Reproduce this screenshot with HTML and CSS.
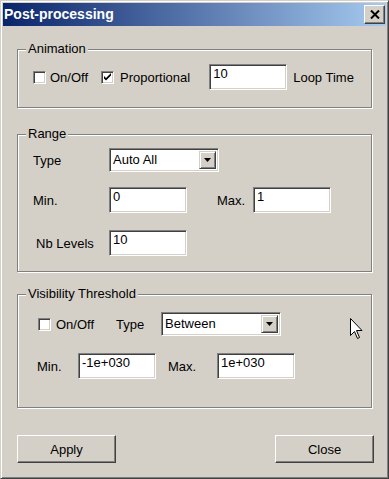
FILE: index.html
```html
<!DOCTYPE html>
<html>
<head>
<meta charset="utf-8">
<link rel="stylesheet" href="styles.css">
</head>
<body>
<div class="window">
  <div class="titlebar">
    <span class="title">Post-processing</span>
    <span class="close-btn"><svg width="10" height="9" viewBox="0 0 10 9"><path d="M1 0.5 L9 8.5 M9 0.5 L1 8.5" stroke="#000" stroke-width="2"/></svg></span>
  </div>
  <div class="client">
    <section class="group g-anim">
      <div class="caption">Animation</div>
      <div class="row r-anim">
        <span class="check c-on"></span><span class="lbl l-on">On/Off</span>
        <span class="check c-prop"><svg width="9" height="9" viewBox="0 0 9 9"><path d="M1 3 L1 5.5 L3 7.5 L8 2.5 L8 0 L3 5 Z" fill="#000"/></svg></span><span class="lbl l-prop">Proportional</span>
        <span class="field f-loop">10</span><span class="lbl l-loop">Loop Time</span>
      </div>
    </section>
    <section class="group g-range">
      <div class="caption">Range</div>
      <div class="row r-type">
        <span class="lbl l-col">Type</span>
        <span class="combo c-type"><span class="combo-text">Auto All</span><span class="drop"><svg width="7" height="4" viewBox="0 0 7 4"><path d="M0 0 H7 L3.5 4 Z" fill="#000"/></svg></span></span>
      </div>
      <div class="row r-min">
        <span class="lbl l-col">Min.</span>
        <span class="field">0</span>
        <span class="lbl l-max">Max.</span>
        <span class="field">1</span>
      </div>
      <div class="row r-nb">
        <span class="lbl l-nb">Nb Levels</span>
        <span class="field">10</span>
      </div>
    </section>
    <section class="group g-vis">
      <div class="caption">Visibility Threshold</div>
      <div class="row r-vis1">
        <span class="check c-vis"></span><span class="lbl l-on">On/Off</span>
        <span class="lbl l-vtype">Type</span>
        <span class="combo c-between"><span class="combo-text">Between</span><span class="drop"><svg width="7" height="4" viewBox="0 0 7 4"><path d="M0 0 H7 L3.5 4 Z" fill="#000"/></svg></span></span>
      </div>
      <div class="row r-vis2">
        <span class="lbl l-vmin">Min.</span>
        <span class="field">-1e+030</span>
        <span class="lbl l-vmax">Max.</span>
        <span class="field">1e+030</span>
      </div>
    </section>
    <div class="buttons">
      <span class="btn">Apply</span>
      <span class="btn">Close</span>
    </div>
  </div>
  <svg class="cursor" width="13" height="22" viewBox="0 0 13 22"><path d="M0.5 0.5 L0.5 17.5 L4.5 13.5 L7.5 20.5 L9.5 19.5 L6.5 12.5 L12 12.5 Z" fill="#fff" stroke="#000" stroke-width="1"/></svg>
</div>
</body>
</html>
```
FILE: styles.css
```css
* { box-sizing: border-box; }
html, body { margin: 0; padding: 0; background: #d4d0c8; }
body {
  font-family: "Liberation Sans", Arial, sans-serif;
  font-size: 13px;
  line-height: 15px;
  color: #000;
}
.window {
  position: relative;
  width: 389px;
  height: 479px;
  background: #d4d0c8;
  border: 1px solid;
  border-color: #d4d0c8 #404040 #404040 #d4d0c8;
  box-shadow: inset 1px 1px 0 #fff, inset -1px -1px 0 #808080;
  padding: 2px;
  display: flex;
  flex-direction: column;
}
.titlebar {
  height: 23px;
  flex: none;
  background: linear-gradient(to right, #0a246a, #a6caf0);
  display: flex;
  align-items: center;
  justify-content: space-between;
  padding: 0 1px 0 1px;
}
.title {
  color: #fff;
  font-weight: bold;
  font-size: 14px;
  line-height: 17px;
}
.close-btn {
  width: 21px;
  height: 19px;
  background: #d4d0c8;
  border: 1px solid;
  border-color: #fff #404040 #404040 #fff;
  box-shadow: inset -1px -1px 0 #808080;
  display: flex;
  align-items: center;
  justify-content: center;
}
.client {
  padding: 0 14px;
  display: flex;
  flex-direction: column;
}
.group {
  border: 1px solid #808080;
  box-shadow: inset 1px 1px 0 #fff, 1px 1px 0 #fff;
  display: flex;
  flex-direction: column;
  flex: none;
}
.caption {
  align-self: flex-start;
  margin: -9px 0 0 8px;
  padding: 0 2px;
  background: #d4d0c8;
}
.g-anim { margin-top: 23px; height: 59px; }
.g-range { margin-top: 26px; height: 138px; }
.g-vis { margin-top: 22px; height: 114px; }

.row { display: flex; align-items: center; }
.lbl { white-space: nowrap; }

.check {
  width: 13px;
  height: 13px;
  flex: none;
  background: #fff;
  border: 1px solid;
  border-color: #808080 #fff #fff #808080;
  box-shadow: inset 1px 1px 0 #404040, inset -1px -1px 0 #d4d0c8;
  display: flex;
  align-items: center;
  justify-content: center;
}
.field {
  width: 78px;
  height: 26px;
  flex: none;
  background: #fff;
  border: 1px solid;
  border-color: #808080 #fff #fff #808080;
  box-shadow: inset 1px 1px 0 #404040, inset -1px -1px 0 #d4d0c8;
  padding: 1px 2px 0 3px;
  line-height: 15px;
  white-space: nowrap;
}
.combo {
  height: 24px;
  flex: none;
  background: #fff;
  border: 1px solid;
  border-color: #808080 #fff #fff #808080;
  box-shadow: inset 1px 1px 0 #404040, inset -1px -1px 0 #d4d0c8;
  padding: 2px;
  display: flex;
  align-items: stretch;
}
.combo-text { flex: 1; padding: 1px 0 0 1px; }
.drop {
  width: 17px;
  flex: none;
  background: #d4d0c8;
  border: 1px solid;
  border-color: #d4d0c8 #404040 #404040 #d4d0c8;
  box-shadow: inset 1px 1px 0 #fff, inset -1px -1px 0 #808080;
  display: flex;
  align-items: center;
  justify-content: center;
}

/* Animation row */
.r-anim { margin-top: 8px; }
.c-on { margin-left: 15px; }
.r-anim .l-on { margin-left: 4px; }
.c-prop { margin-left: 13px; }
.l-prop { margin-left: 6px; }
.f-loop { margin-left: 19px; }
.l-loop { margin-left: 6px; }

/* Range rows */
.r-type { margin-top: 7px; }
.l-col { margin-left: 15px; width: 76px; }
.c-type { width: 110px; }
.r-min { margin-top: 15px; }
.l-max { margin-left: 30px; width: 36px; }
.r-nb { margin-top: 17px; }
.l-nb { margin-left: 18px; width: 73px; }

/* Visibility rows */
.r-vis1 { margin-top: 11px; }
.c-vis { margin-left: 20px; }
.r-vis1 .l-on { margin-left: 5px; }
.l-vtype { margin-left: 22px; width: 45px; }
.c-between { width: 120px; }
.r-vis2 { margin-top: 17px; }
.l-vmin { margin-left: 19px; width: 41px; }
.l-vmax { margin-left: 12px; width: 49px; }

.buttons {
  margin-top: 27px;
  margin-right: -2px;
  display: flex;
  justify-content: space-between;
}
.btn {
  width: 99px;
  height: 28px;
  border: 1px solid;
  border-color: #fff #404040 #404040 #fff;
  box-shadow: inset -1px -1px 0 #808080;
  display: flex;
  align-items: center;
  justify-content: center;
}
.cursor {
  position: absolute;
  left: 349px;
  top: 317px;
}
```
